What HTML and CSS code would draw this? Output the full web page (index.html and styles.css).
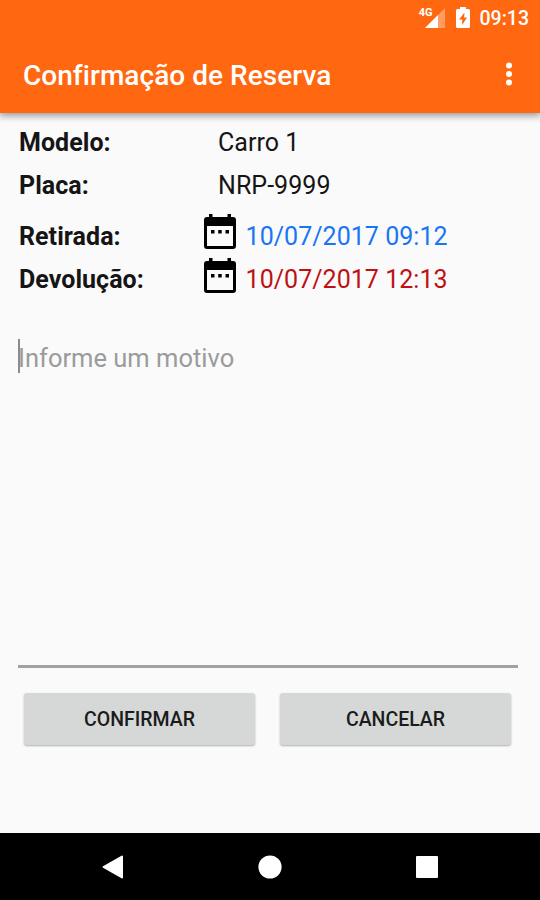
FILE: index.html
```
<!DOCTYPE html>
<html lang="pt-BR">
<head>
<meta charset="utf-8">
<title>Confirmação de Reserva</title>
<link rel="stylesheet" href="styles.css">
</head>
<body>
<div class="screen">
  <header class="top">
    <div class="status">
      <span class="network">4G</span>
      <svg class="signal" width="20" height="20" viewBox="0 0 20 20"><path d="M20 0V20H0Z" fill="#fff" opacity=".35"/><path d="M13 7V20H0Z" fill="#fff"/></svg>
      <svg class="battery" width="14" height="21" viewBox="0 0 14 21"><path fill="#fff" fill-rule="evenodd" d="M4 0H10V2H12.5Q14 2 14 3.500V19.500Q14 21 12.500 21H1.500Q0 21 0 19.500V3.500Q0 2 1.500 2H4ZM8.500 5.500L3 12.500H6.200V18L11 10.500H8Z"/></svg>
      <span class="time">09:13</span>
    </div>
    <div class="appbar">
      <h1>Confirmação de Reserva</h1>
      <svg class="more" width="8" height="24" viewBox="0 0 8 24" fill="#fff"><circle cx="4" cy="3.500" r="3"/><circle cx="4" cy="12" r="3"/><circle cx="4" cy="20.500" r="3"/></svg>
    </div>
  </header>
  <main>
    <dl class="details">
      <div class="row"><dt>Modelo:</dt><dd>Carro 1</dd></div>
      <div class="row"><dt>Placa:</dt><dd>NRP-9999</dd></div>
    </dl>
    <dl class="details dates">
      <div class="row"><dt>Retirada:</dt><dd class="date pickup"><svg class="cal" width="32" height="36" viewBox="0 0 32 36"><path fill-rule="evenodd" d="M5 0H8.500V3H23.500V0H27V3H29Q32 3 32 6V32Q32 35 29 35H3Q0 35 0 32V6Q0 3 3 3H5ZM3 12V32H29V12ZM7 16H10.500V19.500H7ZM14.200 16H17.700V19.500H14.200ZM21.500 16H25V19.500H21.500Z"/></svg><span>10/07/2017 09:12</span></dd></div>
      <div class="row"><dt>Devolução:</dt><dd class="date return"><svg class="cal" width="32" height="36" viewBox="0 0 32 36"><path fill-rule="evenodd" d="M5 0H8.500V3H23.500V0H27V3H29Q32 3 32 6V32Q32 35 29 35H3Q0 35 0 32V6Q0 3 3 3H5ZM3 12V32H29V12ZM7 16H10.500V19.500H7ZM14.200 16H17.700V19.500H14.200ZM21.500 16H25V19.500H21.500Z"/></svg><span>10/07/2017 12:13</span></dd></div>
    </dl>
    <div class="reason"><span class="caret"></span><span class="hint">Informe um motivo</span></div>
    <div class="actions"><button>CONFIRMAR</button><button>CANCELAR</button></div>
  </main>
  <nav>
    <svg width="22" height="24" viewBox="0 0 22 24"><path d="M1.500 12L20 1.500V22.500Z" fill="#fff" stroke="#fff" stroke-width="2" stroke-linejoin="round"/></svg>
    <svg width="24" height="24" viewBox="0 0 24 24"><circle cx="12" cy="12" r="11.600" fill="#fff"/></svg>
    <svg width="22" height="24" viewBox="0 0 22 24"><rect x="0" y="1" width="22" height="22" rx="1" fill="#fff"/></svg>
  </nav>
</div>
</body>
</html>
```
FILE: styles.css
```
* { box-sizing: border-box; }
body, h1, dl, dd { margin: 0; }
body { font-family: Roboto, sans-serif; background: #fafafa; }
.screen { height: 900px; display: flex; flex-direction: column; overflow: hidden; }
.top { height: 113px; background: #ff6710; color: #fff; box-shadow: 0 2px 7px 1px rgba(0,0,0,.38); flex: none; }
.status { height: 36px; display: flex; align-items: flex-start; justify-content: flex-end; padding-right: 11px; }
.network { font-size: 11px; font-weight: 700; line-height: 12px; margin-top: 7px; margin-right: -8px; }
.signal { margin-top: 8px; margin-right: 11px; }
.battery { margin-top: 7px; margin-right: 10px; }
.time { font-size: 19.500px; font-weight: 500; line-height: 24px; margin-top: 7px; }
.appbar { height: 77px; display: flex; align-items: center; justify-content: space-between; padding: 0 27px 0 23px; }
h1 { font-size: 28px; font-weight: 500; line-height: 32px; padding-top: 2px; letter-spacing: .04px; }
.more { margin-top: -2px; }
main { flex: 1; padding: 8px 22px 0 18px; }
.row { display: flex; align-items: center; height: 43.500px; font-size: 25px; line-height: 32px; color: #151515; }
dt { width: 185px; padding-left: 1px; font-weight: 700; letter-spacing: .05px; }
dd { padding-left: 15px; letter-spacing: .05px; }
.dates { margin-top: 7px; }
.date { display: flex; align-items: center; padding: 0; gap: 10px; margin-left: .6px; letter-spacing: .03px; }
.cal { fill: #000; margin-top: -9px; }
.pickup { color: #1976f3; }
.return { color: #bd1114; }
.reason { height: 366px; border-bottom: 3px solid #9fa2a0; display: flex; align-items: flex-start; padding-top: 36px; }
.caret { width: 2px; height: 34px; background: #8b8b8b; margin-top: 1px; }
.hint { font-size: 25.500px; line-height: 34px; margin-top: 3px; margin-left: -2px; color: #9b9b9b; }
.actions { display: grid; grid-template-columns: 231px 231px; gap: 25px; margin: 25px 6px 0; }
button { height: 52px; border: 0; border-radius: 3px; background: #d6d8d7; color: #1b1b1b; font: 500 19.500px/24px Roboto, sans-serif; box-shadow: 0 1px 2px rgba(0,0,0,.3); padding: 2px 0 0; }
nav { flex: none; height: 67px; background: #000; display: flex; justify-content: space-between; align-items: center; padding: 0 102px; }
```
